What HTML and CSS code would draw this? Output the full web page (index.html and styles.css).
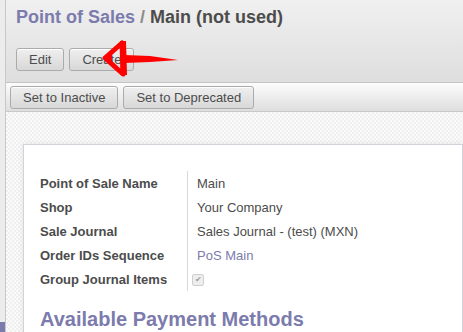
FILE: index.html
```html
<!DOCTYPE html>
<html lang="en">
<head>
    <meta charset="UTF-8">
    <title>Point of Sales / Main</title>
    <link rel="stylesheet" href="styles.css">
</head>
<body>
    <div class="app">
        <div class="left-strip"></div>
        <div class="main">
            <!-- Breadcrumb and action buttons -->
            <div class="header">
                <h2 class="title"><a class="crumb">Point of Sales</a> <span class="sep">/</span> Main (not used)</h2>
                <div class="buttons">
                    <button class="btn">Edit</button>
                    <button class="btn">Create</button>
                </div>
                <!-- red arrow drawn on the screenshot -->
                <svg class="arrow" width="82" height="40" viewBox="0 0 82 40">
                    <polygon points="5,20 22,5 23,36" fill="none" stroke="#f00" stroke-width="5" stroke-linejoin="round"/>
                    <polygon points="4,20 12,16 12,25" fill="#f00"/>
                    <line x1="23" y1="3" x2="24" y2="37" stroke="#f00" stroke-width="6"/>
                    <polygon points="24,17 50,18 78,22 50,24 24,25" fill="#f00"/>
                </svg>
            </div>

            <!-- Status bar -->
            <div class="statusbar">
                <button class="btn">Set to Inactive</button>
                <button class="btn">Set to Deprecated</button>
            </div>

            <!-- Form sheet -->
            <div class="sheet-bg">
                <div class="sheet">
                    <table class="fields">
                        <tr><td class="label">Point of Sale Name</td><td class="value">Main</td></tr>
                        <tr><td class="label">Shop</td><td class="value">Your Company</td></tr>
                        <tr><td class="label">Sale Journal</td><td class="value">Sales Journal - (test) (MXN)</td></tr>
                        <tr><td class="label">Order IDs Sequence</td><td class="value"><a class="link">PoS Main</a></td></tr>
                        <tr><td class="label">Group Journal Items</td><td class="value"><span class="checkbox">&#10004;</span></td></tr>
                    </table>
                    <h1 class="section">Available Payment Methods</h1>
                </div>
            </div>
        </div>
    </div>
</body>
</html>
```

FILE: styles.css
```css
body {
    margin: 0;
    font-family: "Liberation Sans", Arial, sans-serif;
    color: #4c4c4c;
    overflow: hidden;
}
.app {
    display: flex;
    height: 332px;
}
.left-strip {
    width: 5px;
    background: linear-gradient(to bottom, #ececec 0, #ececec 322px, #7c7bad 322px);
    border-right: 1px solid #c8c8c8;
    flex-shrink: 0;
}
.main {
    flex: 1;
    display: flex;
    flex-direction: column;
    min-width: 0;
}
.header {
    position: relative;
    background: linear-gradient(to bottom, #f0f0f0, #dedede);
    padding: 6px 10px 11px 10px;
    border-bottom: 1px solid #c4c4c4;
}
.title {
    margin: 0;
    font-size: 18px;
    font-weight: bold;
    color: #4c4c4c;
    line-height: 22px;
}
.crumb {
    color: #7c7bad;
}
.sep {
    color: #8c8c8c;
}
.buttons {
    display: flex;
    gap: 5px;
    margin-top: 20px;
}
.btn {
    font-family: "Liberation Sans", Arial, sans-serif;
    font-size: 13px;
    color: #4c4c4c;
    background: linear-gradient(to bottom, #efefef, #d8d8d8);
    border: 1px solid #ababab;
    border-radius: 3px;
    height: 23px;
    padding: 0 12px;
    box-shadow: inset 0 1px 0 #fff;
}
.arrow {
    position: absolute;
    left: 94px;
    top: 38px;
}
.statusbar {
    display: flex;
    gap: 5px;
    padding: 3px 4px 2px 4px;
    background: linear-gradient(to bottom, #fcfcfc, #dedede);
    border-bottom: 1px solid #c8c8c8;
}
.sheet-bg {
    flex: 1;
    background-color: #f5f5f5;
    background-image: repeating-conic-gradient(#f0f0f0 0 25%, #fafafa 0 50%);
    background-size: 4px 4px;
    padding: 32px 0 0 17px;
    overflow: hidden;
}
.sheet {
    background: #fff;
    border: 1px solid #d2d2d8;
    box-shadow: 0 0 6px rgba(0, 0, 0, 0.08);
    height: 400px;
    padding: 26px 16px 0 16px;
}
.fields {
    border-collapse: collapse;
    font-size: 13px;
}
.fields td {
    height: 24px;
    padding: 0;
}
.label {
    font-weight: bold;
    width: 147px;
    border-right: 1px solid #d8d8d8;
}
.value {
    padding-left: 9px !important;
}
.link {
    color: #7c7bad;
}
.checkbox {
    display: inline-block;
    margin-left: -5px;
    width: 10px;
    height: 10px;
    border: 1px solid #cfcfcf;
    border-radius: 2px;
    background: #eee;
    color: #a0a0a0;
    font-size: 8px;
    line-height: 10px;
    text-align: center;
    vertical-align: middle;
}
.section {
    margin: 17px 0 0 0;
    font-size: 20px;
    color: #7c7bad;
}
```
